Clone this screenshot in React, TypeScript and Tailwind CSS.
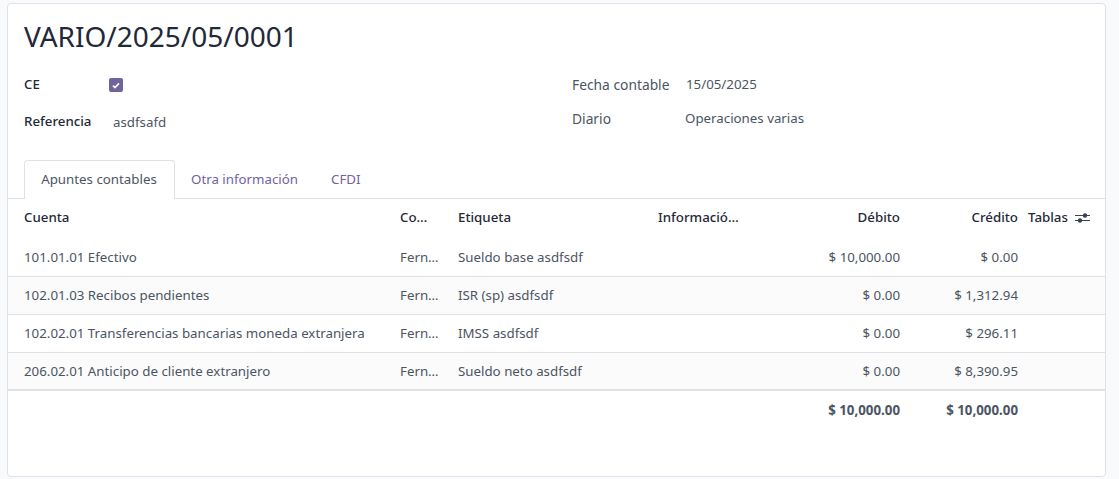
const rows = [
  { account: '101.01.01 Efectivo', label: 'Sueldo base asdfsdf', debit: '$ 10,000.00', credit: '$ 0.00' },
  { account: '102.01.03 Recibos pendientes', label: 'ISR (sp) asdfsdf', debit: '$ 0.00', credit: '$ 1,312.94' },
  { account: '102.02.01 Transferencias bancarias moneda extranjera', label: 'IMSS asdfsdf', debit: '$ 0.00', credit: '$ 296.11' },
  { account: '206.02.01 Anticipo de cliente extranjero', label: 'Sueldo neto asdfsdf', debit: '$ 0.00', credit: '$ 8,390.95' },
];

function OptionalColumnsIcon() {
  return (
    <svg width="16" height="12" viewBox="0 0 16 12" aria-hidden="true">
      <rect x="0" y="3" width="15" height="1" fill="#374151" />
      <rect x="0" y="8" width="15" height="1" fill="#374151" />
      <circle cx="10" cy="3.5" r="2.2" fill="#374151" />
      <circle cx="5" cy="8.5" r="2.2" fill="#374151" />
    </svg>
  );
}

export default function App() {
  return (
    <div className="h-[479px] w-[1119px] overflow-hidden bg-[#f9fafb] pt-[3px] pl-[7px] font-['Noto_Sans',sans-serif] text-[13.3px] text-[#4b5563]">
      <div className="h-[474px] w-[1099px] rounded border border-[#dee2e6] bg-white">
        <div className="px-4 pt-[13px]">
          <h1 className="text-[28px] leading-[38px] font-normal text-[#1f2937]">VARIO/2025/05/0001</h1>

          <div className="mt-[13px] flex">
            <div className="w-[548px]">
              <div className="flex h-[34px] items-center">
                <span className="w-[85px] font-medium text-[#1f2937]">CE</span>
                <span className="flex h-[14px] w-[14px] items-center justify-center rounded-[2px] bg-[#71639e]">
                  <svg width="8" height="7" viewBox="0 0 8 7" aria-hidden="true">
                    <path d="M1 3.6 3 5.6 7 1.4" fill="none" stroke="white" strokeWidth="1.6" />
                  </svg>
                </span>
              </div>
              <div className="mt-[3px] flex h-[34px] items-center">
                <span className="w-[89px] pb-[1px] font-medium text-[#1f2937]">Referencia</span>
                <span className="pt-[2px]">asdfsafd</span>
              </div>
            </div>
            <div>
              <div className="flex h-[34px] items-center">
                <span className="w-[114px] text-[13.8px]">Fecha contable</span>
                <span>15/05/2025</span>
              </div>
              <div className="flex h-[34px] items-center">
                <span className="w-[113px] text-[13.8px]">Diario</span>
                <span>Operaciones varias</span>
              </div>
            </div>
          </div>
        </div>

        <div className="mt-[21px] flex h-[39px] border-b border-[#dee2e6] pl-4">
          <div className="flex h-[39px] w-[151px] items-center justify-center rounded-t border border-b-0 border-[#dee2e6] bg-white pr-[1px]">
            Apuntes contables
          </div>
          <div className="flex h-[38px] items-center pt-[1px] pl-4 text-[#71639e]">Otra información</div>
          <div className="flex h-[38px] items-center pt-[1px] pl-[33px] text-[#71639e]">CFDI</div>
        </div>

        <table className="w-full table-fixed border-collapse">
          <colgroup>
            <col className="w-[392px]" />
            <col className="w-[58px]" />
            <col className="w-[200px]" />
            <col className="w-[100px]" />
            <col className="w-[142px]" />
            <col className="w-[118px]" />
            <col />
          </colgroup>
          <thead>
            <tr className="h-[39px] text-[#1f2937]">
              <th className="pb-[2px] pl-4 text-left font-medium">Cuenta</th>
              <th className="pb-[2px] text-left font-medium">Co…</th>
              <th className="pb-[2px] text-left font-medium">Etiqueta</th>
              <th className="truncate pb-[2px] text-left font-medium">Informació…</th>
              <th className="pb-[2px] text-right font-medium">Débito</th>
              <th className="pb-[2px] text-right font-medium">Crédito</th>
              <th className="pb-[2px] pl-[10px] text-left font-medium">
                <span className="flex items-center gap-[7px]">
                  Tablas
                  <OptionalColumnsIcon />
                </span>
              </th>
            </tr>
          </thead>
          <tbody>
            {rows.map((row, i) => (
              <tr key={row.account} className={`h-[38px] border-b border-[#dee2e6] ${i % 2 === 1 ? 'bg-[#fbfbfb]' : ''}`}>
                <td className="truncate pt-[2px] pl-4">{row.account}</td>
                <td className="pt-[2px]">Fern…</td>
                <td className="pt-[2px]">{row.label}</td>
                <td />
                <td className="pt-[2px] text-right">{row.debit}</td>
                <td className="pt-[2px] text-right">{row.credit}</td>
                <td />
              </tr>
            ))}
          </tbody>
          <tfoot>
            <tr className="h-[38px] border-t-2 border-[#dee2e6] font-bold">
              <td colSpan={4} />
              <td className="pt-[3px] text-right">$ 10,000.00</td>
              <td className="pt-[3px] text-right">$ 10,000.00</td>
              <td />
            </tr>
          </tfoot>
        </table>
      </div>
    </div>
  );
}
